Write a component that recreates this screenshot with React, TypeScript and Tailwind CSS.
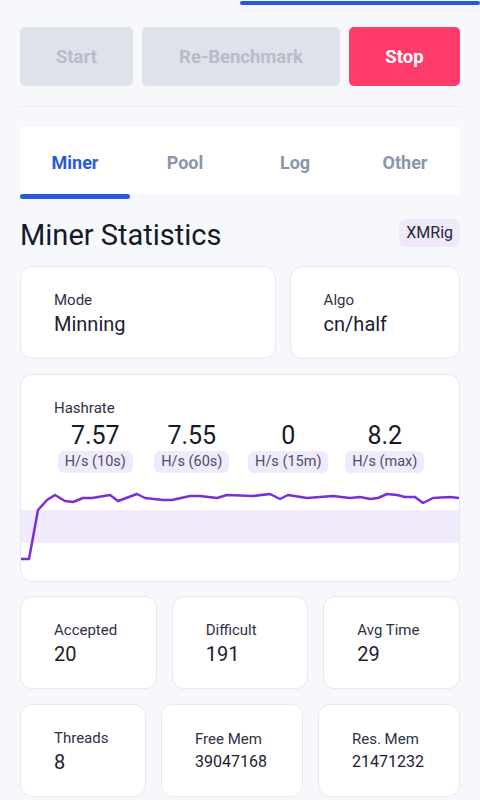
import React from 'react';

const points: [number, number][] = [
  [0, 74], [8, 74], [17, 25], [26, 15], [34, 10], [44, 16], [52, 17], [62, 13], [71, 13], [89, 10],
  [97, 16], [116, 9], [124, 13], [142, 15], [151, 15], [169, 11], [179, 11], [196, 13], [206, 10],
  [232, 11], [249, 9], [259, 14], [267, 10], [286, 13], [312, 11], [329, 13], [339, 12], [349, 14],
  [357, 13], [366, 9], [376, 10], [384, 12], [394, 12], [402, 18], [412, 13], [429, 12], [439, 13],
];

const StatCard: React.FC<{ label: string; value: string; small?: boolean }> = ({ label, value, small }) => (
  <div className="bg-white rounded-[12px] border border-[#e6e8ef] h-[93px] pl-[33px] pt-[2px] flex flex-col justify-center">
    <div className="text-[15px] leading-[20px] text-[#2c3244]">{label}</div>
    <div className={small ? 'mt-[1px] text-[16px] leading-[24px] text-[#1c2130]' : 'mt-[1px] text-[20px] leading-[26px] text-[#1c2130]'}>{value}</div>
  </div>
);

export default function App() {
  const path = points.map((p, i) => `${i === 0 ? 'M' : 'L'}${p[0]} ${p[1]}`).join(' ');
  const rates = [
    { value: '7.57', unit: 'H/s (10s)' },
    { value: '7.55', unit: 'H/s (60s)' },
    { value: '0', unit: 'H/s (15m)' },
    { value: '8.2', unit: 'H/s (max)' },
  ];

  return (
    <div className="min-h-screen bg-[#f7f8fc] px-5" style={{ fontFamily: 'Roboto, "Noto Sans", sans-serif' }}>
      {/* progress */}
      <div className="h-[6px] -mx-5 flex justify-end">
        <div className="w-[240px] h-[4px] mt-[1px] bg-[#2a5bd7] rounded-full" />
      </div>

      {/* actions */}
      <div className="mt-[21px] flex gap-[9px] h-[59px]">
        <button className="w-[113px] pt-[2px] rounded-[5px] bg-[#dfe2ea] text-[#b7bccb] text-[18.5px] font-bold">Start</button>
        <button className="flex-1 pt-[2px] rounded-[5px] bg-[#dfe2ea] text-[#b7bccb] text-[18.5px] font-bold">Re-Benchmark</button>
        <button className="w-[111px] pt-[2px] rounded-[5px] bg-[#ff3b6b] text-white text-[18.5px] font-bold">Stop</button>
      </div>

      <div className="mt-[20px] h-px bg-[#e8ebf2]" />

      {/* tabs */}
      <div className="mt-[20px] bg-white h-[67px] pt-[4px] grid grid-cols-4 items-center text-center text-[18px] font-bold">
        <div className="text-[#2a5bd7]">Miner</div>
        <div className="text-[#8b94aa]">Pool</div>
        <div className="text-[#8b94aa]">Log</div>
        <div className="text-[#8b94aa]">Other</div>
      </div>
      <div className="h-[5px]">
        <div className="w-[110px] h-[5px] bg-[#2a5bd7] rounded-full" />
      </div>

      {/* title */}
      <div className="mt-[20px] h-[28px] flex items-center justify-between">
        <h1 className="mt-[3px] text-[29px] leading-[28px] text-[#141a2a]">Miner Statistics</h1>
        <span className="h-[28px] px-[7px] flex items-center rounded-[6px] bg-[#efe9f9] text-[16px] text-[#222838]">XMRig</span>
      </div>

      {/* mode / algo */}
      <div className="mt-[19px] flex gap-[14px]">
        <div className="flex-[3]">
          <StatCard label="Mode" value="Minning" />
        </div>
        <div className="flex-[2]">
          <StatCard label="Algo" value="cn/half" />
        </div>
      </div>

      {/* hashrate */}
      <div className="mt-[15px] bg-white rounded-[12px] border border-[#e6e8ef] h-[208px] overflow-hidden flex flex-col">
        <div className="pl-[33px] pt-[24px] text-[15px] leading-[18px] text-[#2c3244]">Hashrate</div>
        <div className="mt-[4px] grid grid-cols-4 px-[26px]">
          {rates.map((r) => (
            <div key={r.unit} className="flex flex-col items-center">
              <div className="text-[25px] leading-[30px] text-[#141a2a]">{r.value}</div>
              <div className="h-[22px] px-[7px] flex items-center rounded-[6px] bg-[#f0eafc] text-[14.5px] text-[#4a5064]">
                {r.unit}
              </div>
            </div>
          ))}
        </div>
        <svg className="mt-[12px]" width="440" height="90" viewBox="0 0 440 90">
          <rect x="0" y="25" width="440" height="33" fill="#f1ebfd" />
          <path d={path} fill="none" stroke="#7a2fd6" strokeWidth="2.5" strokeLinejoin="round" />
        </svg>
      </div>

      {/* stats */}
      <div className="mt-[14px] grid grid-cols-3 gap-[15px]">
        <StatCard label="Accepted" value="20" />
        <StatCard label="Difficult" value="191" />
        <StatCard label="Avg Time" value="29" />
      </div>
      <div className="mt-[15px] pb-[4px] grid grid-cols-[126fr_142fr_142fr] gap-[15px]">
        <StatCard label="Threads" value="8" />
        <StatCard label="Free Mem" value="39047168" small />
        <StatCard label="Res. Mem" value="21471232" small />
      </div>
    </div>
  );
}
